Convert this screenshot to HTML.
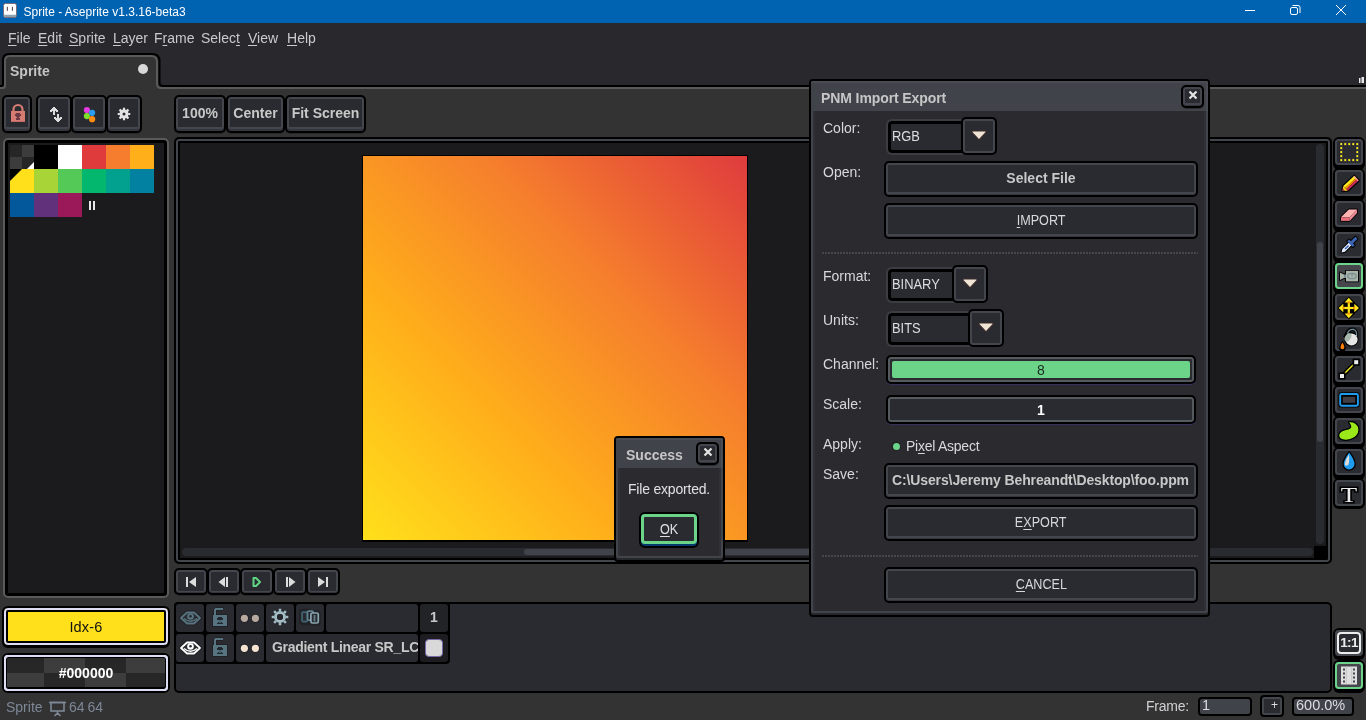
<!DOCTYPE html>
<html lang="en">
<head>
<meta charset="utf-8">
<title>Sprite - Aseprite v1.3.16-beta3</title>
<style>
*{box-sizing:border-box;margin:0;padding:0}
html,body{width:1366px;height:720px;overflow:hidden;background:#333333;}
body>*{will-change:transform}
body{position:relative;font-family:"Liberation Sans",sans-serif;font-size:14px;color:#d4d4d8;-webkit-font-smoothing:antialiased}
.abs{position:absolute}
u{text-decoration:underline;text-underline-offset:1.500px;text-decoration-thickness:1px}
/* ---------- title bar ---------- */
#titlebar{position:absolute;left:0;top:0;width:1366px;height:23px;background:#0063b1;color:#fff;font-size:12px}
#titlebar .ttl{position:absolute;left:23.500px;top:5px;letter-spacing:0px}
#menubar{position:absolute;left:0;top:23px;width:1366px;height:63px;background:#29282d}
#menubar span{position:absolute;top:7px;font-size:14px;color:#c9c9cf}
/* ---------- generic button ---------- */
.btn{position:absolute;background:#2a2b30;border:2px solid #000;border-radius:5px;
 box-shadow:inset 0 -2px 0 #35363d, inset 0 0 0 2px #44464d, inset 0 -4px 0 #44464d, 0 1px 0 #28282a;
 color:#c8c8c8;font-weight:bold;font-size:14px;text-align:center}
.btn .t{position:absolute;left:0;right:0;top:50%;transform:translateY(-58%);line-height:16px}
.panel{position:absolute;background:#1b1b1e;border:1px solid #000;border-radius:5px;
 box-shadow:inset 0 0 0 2px #45464c, inset 0 0 0 5px #000}

.pbtn{position:absolute;top:568px;width:34px;height:27px;background:#2a2b30;border:2px solid #000;border-radius:5px;box-shadow:inset 0 -1px 0 #35363d, inset 0 0 0 2px #44464d, 0 1px 0 #28282a}
.pbtn svg{position:absolute;left:9px;top:6px}
.cell{position:absolute;background:#2a2b30;border-radius:3px}
.tool{position:absolute;left:1333px;width:32px;height:33px;background:#000;border-radius:6px}
.tool i{position:absolute;left:2px;top:2px;width:28px;height:26px;border-radius:4px;background:#2a2b30;box-shadow:inset 0 0 0 2px #44464d}
.tool.sel i{background:#45464c;box-shadow:inset 0 0 0 2px #6bd489}
.tool svg{position:absolute;left:2px;top:2px}
.sent{position:absolute;top:697px;height:19px;background:#41434b;border:2px solid #000;border-radius:4px;color:#dcdce0;font-size:14.500px;line-height:12.500px;padding-left:2px}

.dlg{position:absolute;background:#2b2b2f;border:2px solid #000;border-radius:4px;box-shadow:inset 0 -2px 0 #26272b, inset 0 0 0 2px #42444b, inset 0 -4px 0 #42444b, inset 0 0 0 4px #303136}
.dlg .tb{position:absolute;left:0;top:0;right:0;background:#41434a;box-shadow:inset 0 2px 0 #4a4c54, inset -2px 0 0 #4a4c54;border-radius:2px 2px 0 0;color:#c6c6c6;font-weight:bold;font-size:14px}
.lbl{position:absolute;left:823px;font-size:14px;color:#d8d8dc;white-space:nowrap}
.dbtn{position:absolute;left:884px;width:314px;height:36px;background:#2a2b30;border:2px solid #000;border-radius:5px;box-shadow:inset 0 -1px 0 #35363d, inset 0 0 0 2px #44464d, inset 0 -3px 0 #44464d;color:#d8d8dc;font-size:14px;text-align:center;line-height:31px;white-space:nowrap}
.cbe{position:absolute;background:#2a2b30;border:2px solid #3c3d43;border-radius:6px;box-shadow:inset 0 0 0 3px #000;color:#dcdce2;font-size:14px;padding-left:4px;white-space:nowrap}
.sq{display:inline-block;transform:scaleX(.92);transform-origin:0 50%}
.sqc{display:inline-block;transform:scaleX(.9);transform-origin:50% 50%}
.cbb{position:absolute;width:36px;height:38px;background:#2a2b30;border:2px solid #000;border-radius:5px;box-shadow:inset 0 0 0 2px #44464d}
.cbb svg{position:absolute;left:8px;top:11px}
.sld{position:absolute;left:886px;width:310px;height:29px;background:#2a2b30;border:2px solid #000;border-radius:5px;box-shadow:inset 0 0 0 2px #555a5e, 0 1px 0 #3a2e5a;text-align:center;font-size:14px;line-height:27px}
.sep{position:absolute;left:822px;width:376px;height:2px;background:repeating-linear-gradient(90deg,#46474e 0 2px,#2b2b2f 2px 3px)}
.xb{position:absolute;width:24px;height:24px;background:#2a2b30;border:2px solid #000;border-radius:5px;box-shadow:inset 0 -1px 0 #35363d, inset 0 0 0 2px #44464d, inset 0 -3px 0 #44464d, 0 1px 0 #2c2d33}
</style>
</head>
<body>
<!-- TITLE BAR -->
<div id="titlebar">
  <svg class="abs" style="left:3px;top:3px" width="14" height="15" viewBox="0 0 14 15"><rect x=".5" y=".5" width="13" height="14" rx="2" fill="#fff" stroke="#7a5c5c" stroke-width=".8"/><path d="M1 11.800H13V12.500Q13 14 11.500 14H2.500Q1 14 1 12.500Z" fill="#8fa2b1"/><rect x="3.800" y="3.800" width="1.100" height="4" fill="#5a4a52"/><rect x="8.900" y="3.800" width="1.100" height="4" fill="#5a4a52"/></svg>
  <div class="ttl">Sprite - Aseprite v1.3.16-beta3</div>
  <svg class="abs" style="left:1240px;top:0" width="126" height="23" viewBox="0 0 126 23" fill="none" stroke="#fff" stroke-width="1"><path d="M5 10.5h10"/><rect x="50.5" y="7.500" width="7" height="7" rx="1.5"/><path d="M52.500 5.500h5.500a2 2 0 0 1 2 2v5.500"/><path d="M96 5l10 10M106 5l-10 10"/></svg>
</div>
<!-- MENU BAR -->
<div id="menubar">
  <span style="left:8px"><u>F</u>ile</span>
  <span style="left:38px"><u>E</u>dit</span>
  <span style="left:69px"><u>S</u>prite</span>
  <span style="left:113px"><u>L</u>ayer</span>
  <span style="left:154px">F<u>r</u>ame</span>
  <span style="left:201px">Selec<u>t</u></span>
  <span style="left:248px"><u>V</u>iew</span>
  <span style="left:287px"><u>H</u>elp</span>
</div>
<!--TABS-->
<svg class="abs" style="left:0;top:50px" width="1366" height="42" viewBox="0 50 1366 42">
  <path d="M0 88H3Q5 88 5 85V61Q5 56 10 56H151Q157 56 157 62V84Q157 88 161 88H1366V92H0Z" fill="#333333"/>
  <path d="M0 86H1.500Q3 86 3 84V60Q3 54 9 54H152Q159.500 54 159.500 61V83Q159.500 86 163 86H1366" fill="none" stroke="#000" stroke-width="2"/>
  <path d="M0 88H3Q5 88 5 85V61Q5 56 10 56H151Q157 56 157 62V84Q157 88 161 88H1366" fill="none" stroke="#5a5a5a" stroke-width="2"/>
  <circle cx="143" cy="69" r="5" fill="#d8d8d8"/>
  <rect x="1359" y="78" width="1.500" height="5" fill="#e8e8e8"/><rect x="1361.500" y="77" width="2.500" height="6" fill="#e8e8e8"/>
</svg>
<div class="abs" style="left:10px;top:63px;font-size:14px;font-weight:bold;color:#c4c4c4">Sprite</div>
<!--LEFT-->
<div class="btn" style="left:2px;top:95px;width:30px;height:38px">
  <svg class="abs" style="left:6px;top:6px" width="16" height="20" viewBox="0 0 16 20" shape-rendering="crispEdges"><path d="M3.500 9V6.500A4.500 4.500 0 0 1 12.500 6.500V9" fill="none" stroke="#d57b72" stroke-width="2.200" shape-rendering="auto"/><rect x="1" y="8" width="14" height="11" fill="#d57b72"/><rect x="1" y="17.500" width="14" height="1.500" fill="#c46c66"/><path d="M6 10h4v1h1v2h-1v1h-1v1h1v2H6v-2h1v-1H6v-1H5v-2h1z" fill="#6b3a44"/></svg>
</div>
<div class="btn" style="left:36px;top:95px;width:36px;height:38px">
  <svg class="abs" style="left:11px;top:10px" width="14" height="16" viewBox="0 0 14 16" shape-rendering="crispEdges" fill="#dcdcdc"><path d="M4 0h2v1h1v1h1v1h1v2H7v-1H6v4H4V4H3v1H1V3h1V2h1V1h1z"/><path d="M8 7h2v4h1v-1h2v2h-1v1h-1v1h-1v1H8v-1H7v-1H6v-1H5v-2h2v1h1z"/></svg>
</div>
<div class="btn" style="left:71px;top:95px;width:36px;height:38px">
  <svg class="abs" style="left:0;top:0" width="32" height="34" viewBox="0 0 32 34"><circle cx="13.900" cy="13" r="3.100" fill="#e53be0"/><circle cx="13.900" cy="19.100" r="3.100" fill="#7de02c"/><circle cx="19.100" cy="15.800" r="3.100" fill="#2a9df4"/><circle cx="19.100" cy="22.200" r="3.100" fill="#ff8c12"/></svg>
</div>
<div class="btn" style="left:106px;top:95px;width:36px;height:38px">
  <svg class="abs" style="left:9px;top:10px" width="14" height="14" viewBox="0 0 14 14"><g stroke="#e4e4e4" stroke-width="2.200" stroke-dasharray="2.200 8.200 2.200 0"><path d="M7 .7v12.600M.7 7h12.600M2.550 2.550l8.900 8.900M11.450 2.550l-8.900 8.900"/></g><rect x="2.800" y="2.800" width="8.400" height="8.400" rx="2" fill="#e4e4e4"/><circle cx="7" cy="7" r="1.500" fill="#2a2b30"/></svg>
</div>
<div class="abs" id="palpanel" style="left:3px;top:138px;width:166px;height:460px;background:#1b1b1e;border:2px solid #5a5a5a;border-radius:5px;box-shadow:inset 0 0 0 3px #000"></div>
<svg class="abs" style="left:10px;top:145px" width="144" height="72" viewBox="0 0 144 72" shape-rendering="crispEdges">
  <rect x="0" y="0" width="12" height="12" fill="#262626"/><rect x="12" y="0" width="12" height="12" fill="#3c3c3c"/><rect x="0" y="12" width="12" height="12" fill="#3c3c3c"/><rect x="12" y="12" width="12" height="12" fill="#262626"/>
  <rect x="24" y="0" width="24" height="24" fill="#000"/><rect x="48" y="0" width="24" height="24" fill="#fff"/><rect x="72" y="0" width="24" height="24" fill="#df3b3d"/><rect x="96" y="0" width="24" height="24" fill="#f57d2d"/><rect x="120" y="0" width="24" height="24" fill="#ffaf1a"/>
  <rect x="0" y="24" width="24" height="24" fill="#ffe01b"/><rect x="24" y="24" width="24" height="24" fill="#a9d437"/><rect x="48" y="24" width="24" height="24" fill="#54c958"/><rect x="72" y="24" width="24" height="24" fill="#03b76e"/><rect x="96" y="24" width="24" height="24" fill="#02a18f"/><rect x="120" y="24" width="24" height="24" fill="#0281a1"/>
  <rect x="0" y="48" width="24" height="24" fill="#02589a"/><rect x="24" y="48" width="24" height="24" fill="#61317c"/><rect x="48" y="48" width="24" height="24" fill="#9b1958"/>
  <path d="M0 24h12L0 36z" fill="#000" shape-rendering="auto"/><path d="M24 17v7h-7z" fill="#fff" shape-rendering="auto"/>
  <rect x="79" y="56" width="2" height="9" fill="#e8e8e8"/><rect x="83" y="56" width="2" height="9" fill="#e8e8e8"/>
</svg>
<div class="abs" style="left:2px;top:606px;width:168px;height:41px;background:#ffe01b;border:2px solid #000;border-radius:6px;box-shadow:inset 0 0 0 2px #dcdcf2, inset 0 0 0 4px #000, 0 1px 0 #000;color:#111;font-size:14.500px;text-align:center;line-height:38px;letter-spacing:.2px">Idx-6</div>
<div class="abs" style="left:2px;top:653px;width:168px;height:40px;background:#000;border-radius:6px;overflow:hidden">
  <svg class="abs" style="left:5px;top:5px" width="158" height="30" viewBox="0 0 158 30" shape-rendering="crispEdges"><rect x="0" y="0" width="158" height="30" fill="#272727"/><rect x="37" y="0" width="41" height="15" fill="#3d3d3d"/><rect x="119" y="0" width="39" height="15" fill="#3d3d3d"/><rect x="0" y="15" width="37" height="15" fill="#3d3d3d"/><rect x="78" y="15" width="41" height="15" fill="#3d3d3d"/></svg>
  <div class="abs" style="left:2px;top:2px;width:164px;height:36px;border-radius:4px;box-shadow:inset 0 0 0 2px #dcdcf2, inset 0 0 0 3px #000, inset 0 -4px 0 #000"></div>
  <div class="abs" style="left:2px;top:2px;width:164px;height:36px;border-radius:4px;box-shadow:inset 0 0 0 2px #dcdcf2"></div>
  <div class="abs" style="left:0;top:0;width:168px;line-height:40px;text-align:center;color:#fff;font-weight:bold;font-size:14px">#000000</div>
</div>
<!--CANVAS-->
<div class="btn" style="left:174px;top:95px;width:52px;height:38px"><div class="t">100%</div></div>
<div class="btn" style="left:226px;top:95px;width:59px;height:38px"><div class="t">Center</div></div>
<div class="btn" style="left:285px;top:95px;width:81px;height:38px"><div class="t">Fit Screen</div></div>
<div class="abs" style="left:174px;top:137px;width:1158px;height:427px;background:#1b1b1e;border:2px solid #000;border-radius:5px;box-shadow:inset 0 0 0 2px #44464d, inset 0 0 0 4px #000"></div>
<div class="abs" style="left:362px;top:155px;width:386px;height:387px;background:#000"></div>
<div class="abs" style="left:363px;top:156px;width:384px;height:384px;background:linear-gradient(45deg,#ffe01b 0%,#ffaf1a 33%,#f57d2d 67%,#df3b3d 100%)"></div>
<div class="abs" style="left:182px;top:548px;width:1131px;height:8px;background:#2a2b30;border-radius:4px"></div>
<div class="abs" style="left:524px;top:549px;width:447px;height:6px;background:#41434b;border-radius:3px"></div>
<div class="abs" style="left:1316px;top:144px;width:8px;height:400px;background:#2a2b30;border-radius:4px"></div>
<div class="abs" style="left:1317px;top:242px;width:6px;height:200px;background:#41434b;border-radius:3px"></div>
<div class="abs" style="left:1314px;top:546px;width:14px;height:12px;background:#000"></div>
<!--TIMELINE-->
<div class="pbtn" style="left:174px;width:34px"><svg width="12" height="12" viewBox="0 0 12 12"><rect x="1" y="1" width="2" height="10" fill="#dcdcdc"/><path d="M11 1v10L4 6z" fill="#dcdcdc"/></svg></div>
<div class="pbtn" style="left:207px;width:34px"><svg width="12" height="12" viewBox="0 0 12 12"><path d="M7 1v10L0.500 6z" fill="#dcdcdc"/><rect x="8" y="1" width="2" height="10" fill="#dcdcdc"/></svg></div>
<div class="pbtn" style="left:240px;width:34px"><svg width="12" height="12" viewBox="0 0 12 12"><path d="M2.500 2h2.500l4 4-4 4h-2.500z" fill="none" stroke="#5fd683" stroke-width="2" stroke-linejoin="round"/></svg></div>
<div class="pbtn" style="left:273px;width:34px"><svg width="12" height="12" viewBox="0 0 12 12"><rect x="2" y="1" width="2" height="10" fill="#dcdcdc"/><path d="M5 1v10l6.500-5z" fill="#dcdcdc"/></svg></div>
<div class="pbtn" style="left:306px;width:34px"><svg width="12" height="12" viewBox="0 0 12 12"><path d="M1 1v10l7-5z" fill="#dcdcdc"/><rect x="9" y="1" width="2" height="10" fill="#dcdcdc"/></svg></div>
<div class="abs" style="left:174px;top:602px;width:1158px;height:91px;background:#2a2b30;border:2px solid #000;border-radius:5px"></div>
<div class="abs" style="left:174px;top:602px;width:276px;height:62px;background:#000;border-radius:4px"></div>
<div class="cell" style="left:176px;top:604px;width:28px;height:28px;background:#2a2b30"><svg class="abs" style="left:3px;top:6px" width="23" height="16" viewBox="0 0 23 16" fill="none"><path d="M2 8L8 2.500H15L21 8L15 13.500H8Z" stroke="#1f2125" stroke-width="4" stroke-linejoin="round"/><path d="M2 8L8 2.500H15L21 8L15 13.500H8Z" stroke="#587480" stroke-width="1.800" stroke-linejoin="round" fill="#2a2b30"/><circle cx="11.500" cy="6.500" r="3.300" fill="#587480"/><circle cx="11.500" cy="6.300" r="1.300" fill="#24262b"/><path d="M5 8.500Q11.500 14 18 8.500" stroke="#587480" stroke-width="1.500"/></svg></div>
<div class="cell" style="left:206px;top:604px;width:28px;height:28px;background:#2a2b30"><svg class="abs" style="left:5px;top:2px" width="18" height="22" viewBox="0 0 18 22" shape-rendering="crispEdges"><path d="M4 9V5Q4 3 6 3H12" fill="none" stroke="#1f2125" stroke-width="4"/><rect x="1" y="8" width="16" height="13" fill="#1f2125"/><path d="M4 9V5Q4 3 6 3H12" fill="none" stroke="#587480" stroke-width="2"/><rect x="2" y="9" width="14" height="11" fill="#587480"/><path d="M7 11h4v1h1v2h-2v2h1v1h1v1H6v-1h1v-1h1v-2H6v-2h1z" fill="#23282e"/><rect x="8" y="14" width="2" height="3" fill="#3f6474"/></svg></div>
<div class="cell" style="left:236px;top:604px;width:28px;height:28px;background:#2a2b30"><svg class="abs" style="left:3px;top:9px" width="22" height="11" viewBox="0 0 22 11"><circle cx="5.400" cy="5.300" r="4.600" fill="#202226"/><circle cx="16.400" cy="5.300" r="4.600" fill="#202226"/><circle cx="5.400" cy="5.300" r="3.600" fill="#b8a9a0"/><circle cx="16.400" cy="5.300" r="3.600" fill="#b8a9a0"/></svg></div>
<div class="cell" style="left:266px;top:604px;width:28px;height:28px;background:#2a2b30"><svg class="abs" style="left:4px;top:3px" width="20" height="20" viewBox="0 0 20 20"><circle cx="10" cy="10" r="7.800" fill="#202226"/><g stroke="#a4bcc6" stroke-width="2.600" stroke-dasharray="2.400 11.800 2.400 0"><path d="M10 1.700v16.600M1.700 10h16.600M4.130 4.130l11.740 11.740M15.870 4.130L4.130 15.870"/></g><circle cx="10" cy="10" r="4.500" fill="none" stroke="#a4bcc6" stroke-width="3"/><circle cx="10" cy="10" r="3" fill="#24262b"/></svg></div>
<div class="cell" style="left:296px;top:604px;width:28px;height:28px;background:#2a2b30"><svg class="abs" style="left:3px;top:4px" width="24" height="18" viewBox="3 4 24 18" fill="none" stroke-width="1.700"><rect x="5" y="6.500" width="9" height="13" rx="2" stroke="#202226" stroke-width="3.600"/><rect x="14" y="8" width="9" height="12" rx="2" stroke="#202226" stroke-width="3.600"/><rect x="6" y="8.200" width="5.400" height="9.400" rx="1.200" stroke="#3f6474"/><rect x="11.500" y="7.100" width="5.700" height="9" rx="1.200" stroke="#5f7f8c"/><rect x="14.900" y="9" width="7.400" height="10" rx="1.500" stroke="#8ba5b0" fill="#2a2b30"/><rect x="17.600" y="11" width="1.800" height="6.500" fill="#5f7f8c" stroke="none"/></svg></div>
<div class="cell" style="left:326px;top:604px;width:92px;height:28px;background:#2a2b30"></div>
<div class="cell" style="left:420px;top:604px;width:28px;height:28px;background:#222327"><div class="abs" style="left:0;top:5px;width:28px;text-align:center;font-weight:bold;font-size:14px;color:#c8c8c8">1</div></div>
<div class="cell" style="left:176px;top:634px;width:28px;height:28px;background:#2a2b30"><svg class="abs" style="left:3px;top:6px" width="23" height="16" viewBox="0 0 23 16" fill="none"><path d="M2 8L8 2.500H15L21 8L15 13.500H8Z" stroke="#1f2125" stroke-width="4" stroke-linejoin="round"/><path d="M2 8L8 2.500H15L21 8L15 13.500H8Z" stroke="#ffffff" stroke-width="1.800" stroke-linejoin="round" fill="#2a2b30"/><circle cx="11.500" cy="6.500" r="3.300" fill="#ffffff"/><circle cx="11.500" cy="6.300" r="1.300" fill="#24262b"/><path d="M5 8.500Q11.500 14 18 8.500" stroke="#ffffff" stroke-width="1.500"/></svg></div>
<div class="cell" style="left:206px;top:634px;width:28px;height:28px;background:#2a2b30"><svg class="abs" style="left:5px;top:2px" width="18" height="22" viewBox="0 0 18 22" shape-rendering="crispEdges"><path d="M4 9V5Q4 3 6 3H12" fill="none" stroke="#1f2125" stroke-width="4"/><rect x="1" y="8" width="16" height="13" fill="#1f2125"/><path d="M4 9V5Q4 3 6 3H12" fill="none" stroke="#587480" stroke-width="2"/><rect x="2" y="9" width="14" height="11" fill="#587480"/><path d="M7 11h4v1h1v2h-2v2h1v1h1v1H6v-1h1v-1h1v-2H6v-2h1z" fill="#23282e"/><rect x="8" y="14" width="2" height="3" fill="#3f6474"/></svg></div>
<div class="cell" style="left:236px;top:634px;width:28px;height:28px;background:#2a2b30"><svg class="abs" style="left:3px;top:9px" width="22" height="11" viewBox="0 0 22 11"><circle cx="5.400" cy="5.300" r="4.600" fill="#202226"/><circle cx="16.400" cy="5.300" r="4.600" fill="#202226"/><circle cx="5.400" cy="5.300" r="3.600" fill="#f3e3d0"/><circle cx="16.400" cy="5.300" r="3.600" fill="#f3e3d0"/></svg></div>
<div class="cell" style="left:266px;top:634px;width:152px;height:28px;background:#2a2b30"><div class="abs" style="left:6px;top:5px;width:146px;overflow:hidden;white-space:nowrap;font-weight:bold;font-size:14px;color:#c8c8c8;letter-spacing:-.3px">Gradient Linear SR_LCH</div></div>
<div class="cell" style="left:420px;top:634px;width:28px;height:28px;background:#1d1d21"><div class="abs" style="left:5px;top:5px;width:18px;height:18px;background:#d9d9d9;border:1.500px solid #7868a8;border-radius:4px"></div></div>
<!--TOOLS-->
<div class="tool" style="top:137px"><i></i><svg width="28" height="26" viewBox="0 0 28 26"><g fill="#fff21f" stroke="#14143a" stroke-width=".6"><rect x="5.0" y="3.8" width="2.600" height="2.600"/><rect x="5.0" y="7.8" width="2.600" height="2.600"/><rect x="5.0" y="11.8" width="2.600" height="2.600"/><rect x="5.0" y="15.8" width="2.600" height="2.600"/><rect x="5.0" y="19.8" width="2.600" height="2.600"/><rect x="9.0" y="3.8" width="2.600" height="2.600"/><rect x="9.0" y="19.8" width="2.600" height="2.600"/><rect x="13.0" y="3.8" width="2.600" height="2.600"/><rect x="13.0" y="19.8" width="2.600" height="2.600"/><rect x="17.0" y="3.8" width="2.600" height="2.600"/><rect x="17.0" y="19.8" width="2.600" height="2.600"/><rect x="21.0" y="3.8" width="2.600" height="2.600"/><rect x="21.0" y="7.8" width="2.600" height="2.600"/><rect x="21.0" y="11.8" width="2.600" height="2.600"/><rect x="21.0" y="15.8" width="2.600" height="2.600"/><rect x="21.0" y="19.8" width="2.600" height="2.600"/></g></svg></div>
<div class="tool" style="top:168px"><i></i><svg width="28" height="26" viewBox="0 0 28 26"><g transform="translate(7.500 21) rotate(-42.500)"><path d="M0 0L4 -3.200H19V3.200H4Z" fill="#000" stroke="#000" stroke-width="2.400" stroke-linejoin="round"/><rect x="4" y="-3.200" width="15" height="2.800" fill="#ffe81c"/><rect x="4" y="-.4" width="15" height="1.600" fill="#ff8a00"/><rect x="4" y="1.200" width="15" height="2" fill="#c8285a"/><path d="M0 0L4 -3.200V3.200Z" fill="#ffd21c"/><path d="M0 0L2 -1.600V1.600Z" fill="#b02850"/><rect x="17.800" y="-3.200" width="1.200" height="6.400" fill="#f0a0b0"/></g></svg></div>
<div class="tool" style="top:199px"><i></i><svg width="28" height="26" viewBox="0 0 28 26"><g stroke="#000" stroke-width="1.600" stroke-linejoin="round"><path d="M6 16.300L13.800 8.400H22V12L14.700 19.900H6Z" fill="#000"/></g><path d="M6 16.300L13.800 8.400H22L14.700 16.300Z" fill="#ffb4b4"/><path d="M6 16.300H14.700V19.900H6Z" fill="#e8707c"/><path d="M14.700 16.300L22 8.400V12L14.700 19.900Z" fill="#f08c98"/></svg></div>
<div class="tool" style="top:230px"><i></i><svg width="28" height="26" viewBox="0 0 28 26"><g transform="translate(6.500 20.500) rotate(-44.500)"><path d="M0 0L3 -1.800H12V-4H14.500V-1.500H21V1.500H14.500V4H12V1.800H3Z" fill="#000" stroke="#000" stroke-width="2" stroke-linejoin="round"/><path d="M0 0L3 -1.800H12V1.800H3Z" fill="#e4ecff"/><rect x="5" y="-.8" width="5" height="1.600" fill="#3c64b4"/><path d="M12 -4H14.500V-1.500H21V1.500H14.500V4H12Z" fill="#3c64b4"/></g></svg></div>
<div class="tool sel" style="top:261px"><i></i><svg width="28" height="26" viewBox="0 0 28 26"><g stroke="#000" stroke-width="1.800" stroke-linejoin="round" fill="#000"><path d="M5 9.500L9 11.500H11V7.800H23V18.400H11V15H9L5 17Z"/></g><path d="M5 9.500L9 11.500V15L5 17Z" fill="#a9b5a9"/><rect x="9" y="11.500" width="2" height="3.500" fill="#7f8f95"/><rect x="11" y="7.800" width="12" height="10.600" fill="#a9b5a9"/><ellipse cx="17" cy="13" rx="4.300" ry="2.700" fill="none" stroke="#7a8c94" stroke-width="1.300"/><rect x="16.400" y="10.800" width="1.300" height="3" fill="#7a8c94"/></svg></div>
<div class="tool" style="top:292px"><i></i><svg width="28" height="26" viewBox="0 0 28 26"><path d="M13.800 2.500L25.300 14L13.800 25.500L2.300 14Z" fill="#000"/><g fill="#ffe81c"><path d="M13.800 3.800L18 8.500H9.600Z"/><path d="M13.800 24.200L18 19.500H9.600Z"/><path d="M3.600 14L8.300 9.800V18.200Z"/><path d="M24 14L19.300 9.800V18.200Z"/><rect x="12.700" y="7" width="2.200" height="14"/><rect x="6.800" y="12.900" width="14" height="2.200"/></g><g fill="#ff8a00"><rect x="12.700" y="7.500" width="2.200" height="2"/><rect x="12.700" y="18.500" width="2.200" height="2"/><rect x="7.500" y="12.900" width="2" height="2.200"/><rect x="18.100" y="12.900" width="2" height="2.200"/></g></svg></div>
<div class="tool" style="top:323px"><i></i><svg width="28" height="26" viewBox="0 0 28 26"><path d="M12.500 8.500Q14 3.500 19 4.500Q22 5.500 21.500 11" fill="none" stroke="#000" stroke-width="3.400"/><circle cx="16.300" cy="14.300" r="7.200" fill="#000"/><path d="M7.400 15.500Q11 21 10.600 22.500A3.300 3.300 0 1 1 4.300 22.500Q4 21 7.400 15.500Z" fill="#000"/><path d="M9 12L13 5" stroke="#000" stroke-width="2"/><path d="M12.500 8.500Q14 3.500 19 4.500Q22 5.500 21.500 11" fill="none" stroke="#6f8c98" stroke-width="1.300"/><circle cx="16.600" cy="14.500" r="6" fill="#e6e6e6"/><ellipse cx="13" cy="12.300" rx="2.800" ry="4.600" transform="rotate(32 13 12.300)" fill="#a8b8ac"/><path d="M7.400 17.500Q9.600 21 9.400 22.300A2 2 0 1 1 5.400 22.300Q5.200 21 7.400 17.500Z" fill="#ff8000"/></svg></div>
<div class="tool" style="top:354px"><i></i><svg width="28" height="26" viewBox="0 0 28 26"><path d="M7 20L21 6" stroke="#000" stroke-width="4.200"/><path d="M7 20L21 6" stroke="#f4f020" stroke-width="1.500"/><rect x="4.200" y="17.200" width="5.600" height="5.600" fill="#ececec" stroke="#000" stroke-width="1.600"/><rect x="18.400" y="3.400" width="5.600" height="5.600" fill="#ececec" stroke="#000" stroke-width="1.600"/></svg></div>
<div class="tool" style="top:385px"><i></i><svg width="28" height="26" viewBox="0 0 28 26"><rect x="3.500" y="5.300" width="21" height="15.200" rx="2.500" fill="#000"/><rect x="5.200" y="7" width="17.700" height="11.800" rx="1.500" fill="none" stroke="#1e9cf0" stroke-width="1.900"/><rect x="7.800" y="9.800" width="12.400" height="6" fill="#3e3e44"/></svg></div>
<div class="tool" style="top:416px"><i></i><svg width="28" height="26" viewBox="0 0 28 26"><path d="M14.200 4.300Q20 3.500 23 9Q24.500 15 19.500 19Q13 23 7 21Q3.500 19.500 4.500 16Q6 13 11 12Q17 11 16.200 8Q15.500 6 14.200 4.300Z" fill="#000" stroke="#000" stroke-width="2.600" stroke-linejoin="round"/><path d="M14.200 4.300Q20 3.500 23 9Q24.500 15 19.500 19Q13 23 7 21Q3.500 19.500 4.500 16Q6 13 11 12Q17 11 16.200 8Q15.500 6 14.200 4.300Z" fill="#9be81a"/></svg></div>
<div class="tool" style="top:447px"><i></i><svg width="28" height="26" viewBox="0 0 28 26"><path d="M14.200 3.600Q19.500 11 19.500 15A5.400 5.400 0 0 1 8.700 15Q8.700 11 14.200 3.600Z" fill="#000" stroke="#000" stroke-width="2.600" stroke-linejoin="round"/><path d="M14.200 3.600Q19.500 11 19.500 15A5.400 5.400 0 0 1 8.700 15Q8.700 11 14.200 3.600Z" fill="#1e9cf0"/><path d="M14 5.500Q14.500 12 13.500 15.500Q12 17.500 10 16Q9.500 12 14 5.500Z" fill="#e2dcd8"/></svg></div>
<div class="tool" style="top:478px;height:31px"><i></i><svg width="28" height="26" viewBox="0 0 28 26"><text x="14" y="22.300" text-anchor="middle" font-family="Liberation Serif,serif" font-size="22" fill="#ececec" stroke="#000" stroke-width="3" paint-order="stroke" transform="translate(14 0) scale(1.220 1) translate(-14 0)">T</text></svg></div>
<div class="tool" style="top:628px;height:32px"><i style="height:26px"></i><div class="abs" style="left:4px;top:4px;width:24px;height:22px;border:2px solid #ececec;border-radius:4px;background:#2a2b30;color:#ececec;font-weight:bold;font-size:13.500px;line-height:18px;text-align:center;letter-spacing:-.7px">1:1</div></div>
<div class="tool sel" style="top:660px;height:33px"><i style="height:27px"></i><svg width="28" height="27" viewBox="0 0 28 27"><rect x="6" y="4.500" width="16" height="18" fill="#dedede"/><g fill="#45464c"><rect x="8" y="6.500" width="2" height="2"/><rect x="8" y="10.500" width="2" height="2"/><rect x="8" y="14.500" width="2" height="2"/><rect x="8" y="18.500" width="2" height="2"/><rect x="18" y="6.500" width="2" height="2"/><rect x="18" y="10.500" width="2" height="2"/><rect x="18" y="14.500" width="2" height="2"/><rect x="18" y="18.500" width="2" height="2"/><rect x="10.800" y="4.500" width=".8" height="18" fill="#bdbdbd"/><rect x="16.400" y="4.500" width=".8" height="18" fill="#bdbdbd"/></g></svg></div>
<!--STATUS-->
<div class="abs" style="left:6px;top:699px;font-size:14px;color:#7d8796;white-space:nowrap">Sprite</div>
<svg class="abs" style="left:49px;top:700px" width="18" height="17" viewBox="0 0 18 17" fill="none" stroke="#7d8796" stroke-width="1.600"><path d="M0 2.500H17"/><rect x="2" y="2.500" width="13" height="8.500"/><path d="M8.500 11V14M5.500 16L8.500 13L11.500 16"/></svg>
<div class="abs" style="left:69px;top:699px;font-size:14px;color:#7d8796;white-space:nowrap;word-spacing:-1px">64 64</div>
<div class="abs" style="left:1146px;top:698px;font-size:14px;color:#d0d0d4;white-space:nowrap;letter-spacing:-.25px">Frame:</div>
<div class="sent" style="left:1198px;width:54px">1</div>
<div class="abs" style="left:1260px;top:695px;width:24px;height:22px;background:#2a2b30;border:2px solid #000;border-radius:4px;box-shadow:inset 0 0 0 2px #44464d;color:#dcdce0;font-size:12px;line-height:17px;text-align:center;padding-left:5px">+</div>
<div class="sent" style="left:1292px;width:62px">600.0%</div>
<!--DIALOG-->
<div class="dlg" style="left:809px;top:79px;width:401px;height:538px"><div class="tb" style="height:30px"><span class="abs" style="left:10px;top:9px;letter-spacing:-.1px">PNM Import Export</span></div></div>
<div class="xb" style="left:1181px;top:85px;width:23px;height:23px"><svg class="abs" style="left:5px;top:3px" width="10" height="10" viewBox="0 0 10 10"><path d="M1.500 1.500L8.500 8.500M8.500 1.500L1.500 8.500" stroke="#e4e4e4" stroke-width="2.200"/></svg></div>
<div class="lbl" style="top:120px">Color:</div>
<div class="cbe" style="left:886px;top:119px;width:82px;height:36px;line-height:31px"><span class="sq">RGB</span></div>
<div class="cbb" style="left:961px;top:117px"><svg width="16" height="11" viewBox="0 0 16 11"><path d="M1 1H15V2.500L8 9.800L1 2.500Z" fill="#f0e4d4" stroke="#3a2c2c" stroke-width="1.200" stroke-linejoin="round"/></svg></div>
<div class="lbl" style="top:164px">Open:</div>
<div class="dbtn" style="top:161px;font-weight:bold;color:#c8c8c8">Select File</div>
<div class="dbtn" style="top:203px"><span class="sqc"><u>I</u>MPORT</span></div>
<div class="sep" style="top:252px"></div>
<div class="lbl" style="top:268px">Format:</div>
<div class="cbe" style="left:886px;top:267px;width:73px;height:36px;line-height:31px"><span class="sq">BINARY</span></div>
<div class="cbb" style="left:952px;top:265px"><svg width="16" height="11" viewBox="0 0 16 11"><path d="M1 1H15V2.500L8 9.800L1 2.500Z" fill="#f0e4d4" stroke="#3a2c2c" stroke-width="1.200" stroke-linejoin="round"/></svg></div>
<div class="lbl" style="top:312px">Units:</div>
<div class="cbe" style="left:886px;top:311px;width:89px;height:36px;line-height:31px"><span class="sq">BITS</span></div>
<div class="cbb" style="left:968px;top:309px"><svg width="16" height="11" viewBox="0 0 16 11"><path d="M1 1H15V2.500L8 9.800L1 2.500Z" fill="#f0e4d4" stroke="#3a2c2c" stroke-width="1.200" stroke-linejoin="round"/></svg></div>
<div class="lbl" style="top:356px">Channel:</div>
<div class="sld" style="top:355px;color:#1c2a22"><div class="abs" style="left:4px;top:4px;right:4px;bottom:4px;background:#6bd489;border-radius:2px"></div><span style="position:relative">8</span></div>
<div class="lbl" style="top:396px">Scale:</div>
<div class="sld" style="top:395px;color:#fff;font-weight:bold">1</div>
<div class="lbl" style="top:436px">Apply:</div>
<div class="abs" style="left:891px;top:441px;width:10px;height:10px;border-radius:5px;background:#232428"></div>
<div class="abs" style="left:892.500px;top:442.500px;width:7px;height:7px;border-radius:4px;background:#6bd489"></div>
<div class="lbl" style="left:906px;top:438px"><span style="letter-spacing:-.25px">Pi<u>x</u>el Aspect</span></div>
<div class="lbl" style="top:466px">Save:</div>
<div class="dbtn" style="top:463px;font-weight:bold;color:#c8c8c8;text-align:left;padding-left:6px;font-size:14px;letter-spacing:-.12px;overflow:hidden">C:\Users\Jeremy Behreandt\Desktop\foo.ppm</div>
<div class="dbtn" style="top:505px"><span class="sqc">E<u>X</u>PORT</span></div>
<div class="sep" style="top:555px"></div>
<div class="dbtn" style="top:567px"><span class="sqc"><u>C</u>ANCEL</span></div>
<!--SUCCESS-->
<div class="dlg" style="left:614px;top:436px;width:111px;height:126px"><div class="tb" style="height:30px"><span class="abs" style="left:10px;top:9px">Success</span></div></div>
<div class="xb" style="left:696px;top:442px;width:23px;height:23px"><svg class="abs" style="left:5px;top:3px" width="10" height="10" viewBox="0 0 10 10"><path d="M1.500 1.500L8.500 8.500M8.500 1.500L1.500 8.500" stroke="#e4e4e4" stroke-width="2.200"/></svg></div>
<div class="abs" style="left:628px;top:481px;font-size:14px;color:#e0e0e4;white-space:nowrap;letter-spacing:-.2px">File exported.</div>
<div class="abs" style="left:639px;top:512px;width:60px;height:36px;background:#04396c;border:2px solid #000;border-radius:6px"><div class="abs" style="left:0;top:0;right:0;height:30px;background:#2a2b30;border:3px solid #6bd489;border-radius:4px;color:#e0e0e4;font-size:14px;text-align:center;line-height:25px"><span class="sqc"><u>O</u>K</span></div></div>
</body>
</html>
